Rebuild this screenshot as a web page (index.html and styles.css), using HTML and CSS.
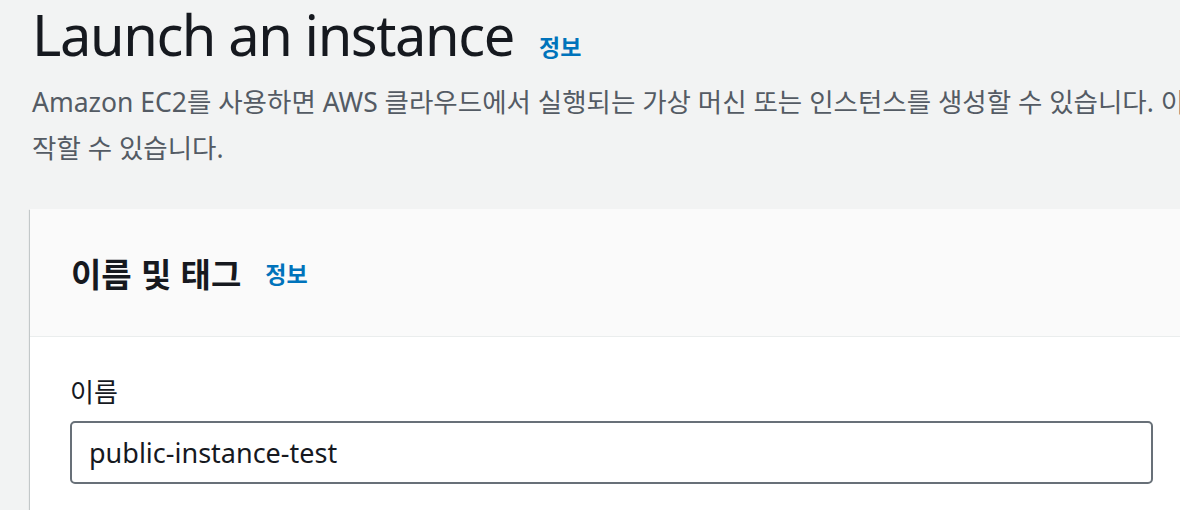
FILE: index.html
```html
<!DOCTYPE html>
<html lang="ko">
<head>
<meta charset="utf-8">
<title>Launch an instance</title>
<link rel="stylesheet" href="styles.css">
</head>
<body>
<div class="page">
  <header class="page-head">
    <div class="title-row">
      <h1 class="title">Launch an instance</h1>
      <a class="info" href="#">정보</a>
    </div>
    <p class="desc">Amazon EC2를 사용하면 AWS 클라우드에서 실행되는 가상 머신 또는 인스턴스를 생성할 수 있습니다. 이 간단한 단계에 따라 빠르게 시<br>작할 수 있습니다.</p>
  </header>
  <section class="card">
    <div class="card-head">
      <h2 class="card-title">이름 및 태그</h2>
      <a class="info" href="#">정보</a>
    </div>
    <div class="card-body">
      <label class="field-label" for="name">이름</label>
      <input class="field-input" id="name" type="text" value="public-instance-test">
    </div>
  </section>
</div>
</body>
</html>
```
FILE: styles.css
```css
html, body {
  margin: 0;
  padding: 0;
}
body {
  background: #f2f3f3;
  width: 1180px;
  height: 510px;
  overflow: hidden;
  font-family: "Noto Sans", "Noto Sans CJK KR", sans-serif;
  color: #16191f;
}
.page {
  width: 1700px;
  padding-left: 32px;
}
.title-row {
  display: flex;
  align-items: baseline;
  gap: 25px;
}
.title {
  margin: 0;
  font-size: 56px;
  font-weight: 400;
  line-height: 68px;
  letter-spacing: -1.4px;
}
.info {
  color: #0073bb;
  font-weight: 700;
  font-size: 23px;
  text-decoration: none;
  font-family: "Noto Sans CJK KR", sans-serif;
}
.desc {
  margin: 11px 0 0;
  font-size: 26.5px;
  line-height: 46px;
  color: #545b64;
  white-space: nowrap;
}
.card {
  margin-top: 38px;
  margin-left: -2px;
  background: #ffffff;
  box-shadow: 0 1px 1px 0 rgba(0, 28, 36, 0.3), 1px 1px 1px 0 rgba(0, 28, 36, 0.15), -1px 1px 1px 0 rgba(0, 28, 36, 0.15);
}
.card-head {
  display: flex;
  align-items: center;
  gap: 24px;
  height: 127px;
  padding: 0 41px;
  background: #fafafa;
  border-bottom: 1px solid #eaeded;
}
.card-title {
  margin: 0;
  font-size: 33px;
  font-weight: 700;
  font-family: "Noto Sans CJK KR", sans-serif;
}
.card-body {
  padding: 38px 40px 40px;
  display: flex;
  flex-direction: column;
}
.field-label {
  font-size: 26px;
  line-height: 32px;
  font-family: "Noto Sans CJK KR", sans-serif;
  margin-bottom: 14px;
}
.field-input {
  box-sizing: border-box;
  width: 1083px;
  height: 63px;
  margin: 0;
  padding: 0 17px;
  border: 2px solid #687078;
  border-radius: 5px;
  font-family: "Noto Sans", sans-serif;
  font-size: 27px;
  color: #16191f;
  background: #fff;
  outline: none;
}
```
